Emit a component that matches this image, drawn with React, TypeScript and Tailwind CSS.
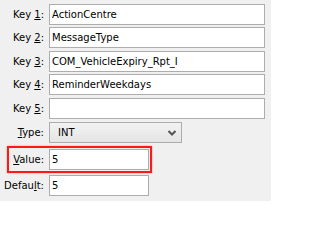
const font = { fontFamily: '"DejaVu Sans", Verdana, sans-serif' };

function Label({ pre, key1, post, className = "w-[44px]" }: { pre: string; key1: string; post: string; className?: string }) {
	return (
		<span className={`${className} shrink-0 whitespace-nowrap text-right text-[10px] text-black`}>
			{pre}
			<span className="underline underline-offset-[1px]">{key1}</span>
			{post}
		</span>
	);
}

function Field({ value, width }: { value: string; width: string }) {
	return (
		<div className={`${width} flex h-[21px] items-center border border-[#adadad] bg-white pl-[2px] text-[10px] text-black`}>
			{value}
		</div>
	);
}

export default function App() {
	const keys = [
		{ n: "1", v: "ActionCentre", mt: "mt-0" },
		{ n: "2", v: "MessageType", mt: "mt-[2px]" },
		{ n: "3", v: "COM_VehicleExpiry_Rpt_I", mt: "mt-[3px]" },
		{ n: "4", v: "ReminderWeekdays", mt: "mt-[2px]" },
		{ n: "5", v: "", mt: "mt-[3px]" },
	];

	return (
		<div style={font} className="flex h-[201px] w-[271px] flex-col bg-[#f0f0f0] pt-[4px]">
			{keys.map((k) => (
				<div key={k.n} className={`flex items-center gap-[5px] ${k.mt}`}>
					<Label pre="Key " key1={k.n} post=":" />
					<Field value={k.v} width="w-[216px]" />
				</div>
			))}
			<div className="mt-[3px] flex items-center gap-[5px]">
				<Label pre="" key1="T" post="ype:" />
				<div className="flex h-[21px] w-[133px] items-center justify-between border border-[#acacac] bg-gradient-to-b from-[#f2f2f2] to-[#e5e5e5] pl-[8px] pr-[5px] text-[10px] text-black">
					<span>INT</span>
					<svg width="8" height="6" viewBox="0 0 8 6" className="mt-[1px]">
						<path d="M0.5 1 L4 4.5 L7.5 1" stroke="#555" strokeWidth="2" fill="none" />
					</svg>
				</div>
			</div>
			<div className="ml-[7px] mt-[3px] flex w-[145px] items-center gap-[5px] border-2 border-[#ff1a1a] p-[1px] shadow-[0_0_1.5px_#ff8080]">
				<Label pre="" key1="V" post="alue:" className="w-[34px]" />
				<Field value="5" width="w-[100px]" />
			</div>
			<div className="mt-[2px] flex items-center gap-[5px]">
				<Label pre="Defau" key1="l" post="t:" />
				<Field value="5" width="w-[100px]" />
			</div>
		</div>
	);
}
